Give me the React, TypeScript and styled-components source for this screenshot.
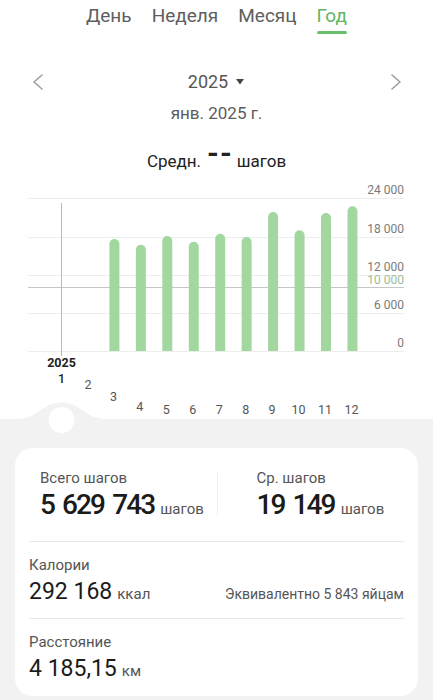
import styled, { createGlobalStyle } from "styled-components";

const GlobalStyle = createGlobalStyle`
  html,
  body {
    margin: 0;
    background: #fff;
    font-family: Roboto, "Noto Sans", sans-serif;
  }
  #root {
    min-height: 100vh;
  }
`;

const Page = styled.div`
  min-height: 100vh;
  display: flex;
  flex-direction: column;
  background: #fff;
`;

const Tabs = styled.div`
  display: flex;
  justify-content: center;
  gap: 20px;
  padding-top: 4px;
`;

const Tab = styled.div<{ $active?: boolean }>`
  position: relative;
  font-size: 19px;
  line-height: 24px;
  padding-bottom: 6px;
  color: ${(p) => (p.$active ? "#62b65f" : "#5e5e5e")};

  &::after {
    content: "";
    display: ${(p) => (p.$active ? "block" : "none")};
    position: absolute;
    left: 0;
    right: 0;
    top: 27px;
    height: 3px;
    border-radius: 2px;
    background: #6abf69;
  }
`;

const YearNav = styled.div`
  margin-top: 36px;
  height: 24px;
  display: flex;
  align-items: center;
  justify-content: space-between;
  padding: 0 31px 0 32px;
`;

const YearButton = styled.div`
  display: flex;
  align-items: center;
  gap: 8px;
  font-size: 18px;
  line-height: 24px;
  color: #555;
  margin-left: -2px;
`;

const Subtitle = styled.div`
  margin-top: 8px;
  text-align: center;
  font-size: 17px;
  line-height: 22px;
  color: #5c5c5c;
`;

const AvgTitle = styled.div`
  margin-top: 26px;
  text-align: center;
  font-size: 17px;
  line-height: 22px;
  color: #222;
`;

const AvgValue = styled.span`
  display: inline-block;
  margin: 0 4px 0 6px;
  font-size: 30px;
  font-weight: 700;
  line-height: 0;
  letter-spacing: 1px;
  vertical-align: 4px;
  color: #222;
`;

const Chart = styled.svg`
  display: block;
  font-family: Roboto, "Noto Sans", sans-serif;
`;

const Panel = styled.div`
  position: relative;
  flex: 1;
  background: #f2f2f2;
  padding: 29px 15px 3px;
`;

const Hump = styled.svg`
  position: absolute;
  left: 0;
  top: -17px;
`;

const Card = styled.div`
  background: #fff;
  border-radius: 18px;
  padding: 0 14px 13px;
`;

const TotalsRow = styled.div`
  display: grid;
  grid-template-columns: 1fr 1fr;
  padding: 20px 0 19px;
  border-bottom: 1px solid #e8e8e8;
`;

const TotalCol = styled.div<{ $divider?: boolean }>`
  position: relative;
  padding-left: ${(p) => (p.$divider ? "40px" : "11px")};

  &::before {
    content: "";
    display: ${(p) => (p.$divider ? "block" : "none")};
    position: absolute;
    left: 0;
    top: 5px;
    bottom: 7px;
    width: 1px;
    background: #eeeeee;
  }
`;

const Label = styled.div`
  font-size: 15px;
  line-height: 20px;
  color: #555;
`;

const BigValue = styled.div`
  font-size: 28px;
  font-weight: 500;
  line-height: 34px;
  letter-spacing: -1.9px;
  word-spacing: 3px;
  color: #1b1b1b;
  white-space: nowrap;
`;

const Unit = styled.span<{ $gap?: number }>`
  font-size: 15px;
  font-weight: 400;
  line-height: 1;
  letter-spacing: 0;
  word-spacing: 0;
  color: #555;
  margin-left: ${(p) => p.$gap ?? 5}px;
`;

const StatRow = styled.div<{ $last?: boolean }>`
  padding: 13px 0 ${(p) => (p.$last ? "0" : "12px")};
  border-bottom: ${(p) => (p.$last ? "none" : "1px solid #e8e8e8")};
`;

const ValueLine = styled.div`
  margin-top: 3px;
  display: flex;
  align-items: baseline;
  justify-content: space-between;
`;

const MidValue = styled.div`
  font-size: 23px;
  line-height: 28px;
  color: #1b1b1b;
`;

const Note = styled.div`
  font-size: 14px;
  line-height: 1;
  color: #555;
`;

const months = [0, 0, 17.57, 16.67, 18.04, 17.15, 18.4, 17.88, 21.8, 18.93, 21.65, 22.7];
const labelY = [211, 217, 229, 239, 242, 242, 242, 242, 242, 242, 242, 242];
const grid = [
  { y: 26, label: "24 000" },
  { y: 65, label: "18 000" },
  { y: 103, label: "12 000" },
  { y: 141, label: "6 000" },
  { y: 179, label: "0" },
];
const base = 179;
const colX = (i: number) => 61.5 + i * 26.45;

function Chevron({ dir }: { dir: "left" | "right" }) {
  return (
    <svg width="12" height="16" viewBox="0 0 12 16">
      <polyline
        points={dir === "left" ? "10,1 2,8 10,15" : "2,1 10,8 2,15"}
        fill="none"
        stroke="#9e9e9e"
        strokeWidth="1.6"
        strokeLinecap="round"
        strokeLinejoin="round"
      />
    </svg>
  );
}

function StepsChart() {
  return (
    <Chart width="433" height="247" viewBox="0 0 433 247">
      {grid.map((g) => (
        <g key={g.label}>
          <line x1="28" x2="404" y1={g.y + 0.5} y2={g.y + 0.5} stroke="#ededed" />
          <text x="404" y={g.y - 4} textAnchor="end" fontSize="12" fill="#7a7a7a">
            {g.label}
          </text>
        </g>
      ))}
      <line x1="28" x2="404" y1="115.5" y2="115.5" stroke="#c6c6c6" />
      <text x="404" y="112" textAnchor="end" fontSize="12" fill="#9cbc9b">
        10 000
      </text>
      {months.map((v, i) => {
        if (!v) return null;
        const x = colX(i) - 5;
        const top = base - v * 6.375;
        return (
          <path
            key={i}
            d={`M${x} ${base} V${top + 5} A5 5 0 0 1 ${x + 10} ${top + 5} V${base} Z`}
            fill="#a3d7a0"
          />
        );
      })}
      <rect x="61" y="31" width="1" height="153" fill="#9ad197" />
      <text x="61.5" y="195" textAnchor="middle" fontSize="12.5" fontWeight="700" fill="#222">
        2025
      </text>
      {months.map((_, i) => (
        <text
          key={i}
          x={colX(i) - (i > 1 ? 1 : 0)}
          y={labelY[i]}
          textAnchor="middle"
          fontSize="12.5"
          fontWeight={i === 0 ? 500 : 400}
          fill={i === 0 ? "#222" : "#555"}
        >
          {i + 1}
        </text>
      ))}
    </Chart>
  );
}

export default function App() {
  return (
    <Page>
      <GlobalStyle />
      <Tabs>
        <Tab>День</Tab>
        <Tab>Неделя</Tab>
        <Tab>Месяц</Tab>
        <Tab $active>Год</Tab>
      </Tabs>

      <YearNav>
        <Chevron dir="left" />
        <YearButton>
          2025
          <svg width="8" height="6" viewBox="0 0 8 6">
            <polygon points="0,0 8,0 4,5.5" fill="#444" />
          </svg>
        </YearButton>
        <Chevron dir="right" />
      </YearNav>
      <Subtitle>янв. 2025 г.</Subtitle>

      <AvgTitle>
        Средн.<AvgValue>--</AvgValue>шагов
      </AvgTitle>

      <StepsChart />

      <Panel>
        <Hump width="120" height="31" viewBox="0 0 120 31">
          <path d="M16 17 C38 17 42 0.5 61.5 0.5 C81 0.5 85 17 107 17 V31 H16 Z" fill="#f2f2f2" />
          <circle cx="61.5" cy="18" r="13" fill="#fff" />
        </Hump>
        <Card>
          <TotalsRow>
            <TotalCol>
              <Label>Всего шагов</Label>
              <BigValue>
                5 629 743<Unit $gap={6}>шагов</Unit>
              </BigValue>
            </TotalCol>
            <TotalCol $divider>
              <Label>Ср. шагов</Label>
              <BigValue>
                19 149<Unit $gap={6}>шагов</Unit>
              </BigValue>
            </TotalCol>
          </TotalsRow>

          <StatRow>
            <Label>Калории</Label>
            <ValueLine>
              <MidValue>
                292 168<Unit>ккал</Unit>
              </MidValue>
              <Note>Эквивалентно 5 843 яйцам</Note>
            </ValueLine>
          </StatRow>

          <StatRow $last>
            <Label>Расстояние</Label>
            <ValueLine>
              <MidValue>
                4 185,15<Unit>км</Unit>
              </MidValue>
            </ValueLine>
          </StatRow>
        </Card>
      </Panel>
    </Page>
  );
}
